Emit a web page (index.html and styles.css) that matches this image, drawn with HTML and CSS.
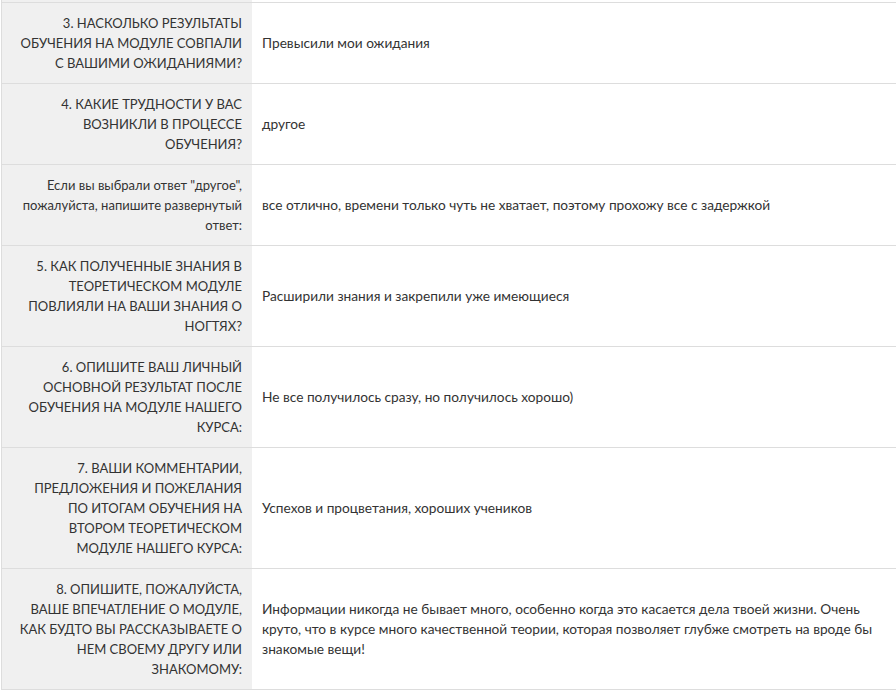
FILE: index.html
```html
<!DOCTYPE html>
<html lang="ru">
<head>
<meta charset="utf-8">
<link rel="stylesheet" href="styles.css">
</head>
<body>
<table class="answers">
  <tr class="stub"><th></th><td></td></tr>
  <tr><th>3. НАСКОЛЬКО РЕЗУЛЬТАТЫ ОБУЧЕНИЯ НА МОДУЛЕ СОВПАЛИ С ВАШИМИ ОЖИДАНИЯМИ?</th><td>Превысили мои ожидания</td></tr>
  <tr><th>4. КАКИЕ ТРУДНОСТИ У ВАС ВОЗНИКЛИ В ПРОЦЕССЕ ОБУЧЕНИЯ?</th><td>другое</td></tr>
  <tr><th class="plain">Если вы выбрали ответ "другое", пожалуйста, напишите развернутый ответ:</th><td>все отлично, времени только чуть не хватает, поэтому прохожу все с задержкой</td></tr>
  <tr><th>5. КАК ПОЛУЧЕННЫЕ ЗНАНИЯ В ТЕОРЕТИЧЕСКОМ МОДУЛЕ ПОВЛИЯЛИ НА ВАШИ ЗНАНИЯ О НОГТЯХ?</th><td>Расширили знания и закрепили уже имеющиеся</td></tr>
  <tr><th>6. ОПИШИТЕ ВАШ ЛИЧНЫЙ ОСНОВНОЙ РЕЗУЛЬТАТ ПОСЛЕ ОБУЧЕНИЯ НА МОДУЛЕ НАШЕГО КУРСА:</th><td>Не все получилось сразу, но получилось хорошо)</td></tr>
  <tr><th>7. ВАШИ КОММЕНТАРИИ, ПРЕДЛОЖЕНИЯ И ПОЖЕЛАНИЯ ПО ИТОГАМ ОБУЧЕНИЯ НА ВТОРОМ ТЕОРЕТИЧЕСКОМ МОДУЛЕ НАШЕГО КУРСА:</th><td>Успехов и процветания, хороших учеников</td></tr>
  <tr><th>8. ОПИШИТЕ, ПОЖАЛУЙСТА, ВАШЕ ВПЕЧАТЛЕНИЕ О МОДУЛЕ, КАК БУДТО ВЫ РАССКАЗЫВАЕТЕ О НЕМ СВОЕМУ ДРУГУ ИЛИ ЗНАКОМОМУ:</th><td>Информации никогда не бывает много, особенно когда это касается дела твоей жизни. Очень круто, что в курсе много качественной теории, которая позволяет глубже смотреть на вроде бы знакомые вещи!</td></tr>
</table>
</body>
</html>
```
FILE: styles.css
```css
html, body {
  margin: 0;
  padding: 0;
  background: #fff;
}
body {
  font-family: Lato, "Open Sans", "Liberation Sans", sans-serif;
  font-size: 13.7px;
  color: #333;
  overflow: hidden;
}
.answers {
  border-collapse: collapse;
  margin-left: 1px;
  width: 910px;
  border-left: 1px solid #ddd;
}
.answers th,
.answers td {
  border-top: 1px solid #ddd;
  border-bottom: 1px solid #ddd;
  padding: 10px;
  line-height: 20px;
  vertical-align: middle;
}
.answers th {
  width: 227px;
  padding-left: 13px;
  background: #f0f0f0;
  text-align: right;
  font-weight: normal;
  font-size: 13px;
}
.answers td {
  text-align: left;
  padding-right: 25px;
}
.answers .stub th,
.answers .stub td {
  padding: 0;
  height: 2px;
  line-height: 2px;
  border-top: none;
}
```
